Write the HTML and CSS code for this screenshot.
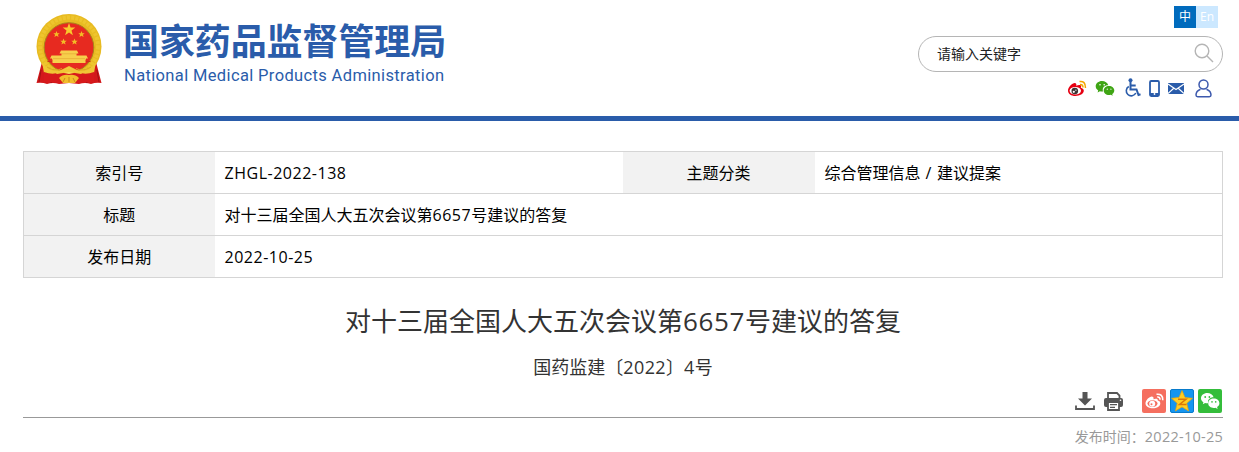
FILE: index.html
```html
<!DOCTYPE html>
<html lang="zh-CN">
<head>
<meta charset="utf-8">
<title>对十三届全国人大五次会议第6657号建议的答复</title>
<link rel="stylesheet" href="styles.css">
</head>
<body>
<header class="header">
  <div class="brand">
    <svg class="emblem" viewBox="0 0 68 72" width="68" height="72">
      <path d="M7 48 L1.500 69 Q7 68 12 70 Q18 68 24 70 L34 69 L44 70 Q50 68 56 70 Q61 68 66.500 69 L61 48Z" fill="#d3181b"/>
      <path d="M6 56l-2 12M11 58l-1 11M18 62l-2 7M62 56l2 12M57 58l1 11M50 62l2 7" stroke="#9f1013" stroke-width="1" fill="none"/>
      <circle cx="34" cy="32.500" r="32.500" fill="#e8bb22"/>
      <circle cx="34" cy="32.500" r="29" fill="none" stroke="#eec52e" stroke-width="4" stroke-dasharray="3 1.200"/>
      <circle cx="34" cy="33.500" r="24.800" fill="#e72a20" stroke="#a9841a" stroke-width="1"/>
      <path d="M34 9l1.600 4.600h4.700l-3.800 2.900 1.400 4.700-3.900-2.800-3.900 2.800 1.400-4.700-3.800-2.900h4.700z" fill="#f9c92c"/>
      <g fill="#f3bc26">
        <path id="star" d="M21.500 17l.9 2.200h2.300l-1.800 1.500.7 2.400-2.100-1.400-2.100 1.400.7-2.400-1.800-1.500h2.300z"/>
        <use href="#star" x="25"/><use href="#star" x="7" y="7.500"/><use href="#star" x="18" y="7.500"/>
      </g>
      <path d="M26 36.500h16l1.500 3h-2v2h10l1.500 3h-2v5h-34v-5h-2l1.500-3h10v-2h-2z" fill="#f7cf4b"/>
      <path d="M27 39.800h14M18 44.600h32" stroke="#e5ab35" stroke-width=".7"/>
      <path d="M13 45.500h4v4h34v-4h4" fill="none" stroke="#e72a20" stroke-width="1"/>
      <path d="M12.500 47.500h4.500M51 47.500h4.500" stroke="#c9301c"/>
      <path d="M7 48q8 12 19 8l8-4 8 4q11 4 19-8l-2 11q-8 7-18 4l-7-4-7 4q-10 3-18-4z" fill="#f0c636"/>
      <path d="M12 53q8 5 15 1.500M56 53q-8 5-15 1.500" fill="none" stroke="#dba624"/>
      <path d="M27 57l7-3.500 7 3.500-7 4z" fill="#f8d85a"/>
      <path d="M9 58q10 4 18-1l2 2 5 1 5-1 2-2q8 5 18 1v11q-9-2-14 0l-11-1-11 1q-5-2-14 0z" fill="#d7191c"/>
      <path d="M19 58q8-1 15-4 7 3 15 4l-3 2-12-2-12 2z" fill="#f0c636"/>
      <path d="M24 64q4-4 10-3 6-1 10 3l-4 5H28z" fill="#f2bd2b"/>
      <path d="M28 68l2-4m4 4v-5m6 5l-2-4" stroke="#cb851c"/>
    </svg>
    <div class="brand-text">
      <div class="brand-cn">国家药品监督管理局</div>
      <div class="brand-en">National Medical Products Administration</div>
    </div>
  </div>
  <div class="tools">
    <div class="lang"><a class="cn">中</a><a class="en">En</a></div>
    <div class="search"><span>请输入关键字</span>
      <svg width="20" height="20" viewBox="0 0 20 20" fill="none" stroke="#b5b5b5" stroke-width="1.400"><circle cx="8" cy="8" r="6.800"/><path d="M13 13l6 6"/></svg>
    </div>
    <div class="quick">
      <svg class="q-weibo" width="20" height="17" viewBox="0 0 20 17">
        <path d="M1 10.500C1 7 6 2.300 8.500 3.200c1 .4 1 1.500.7 2.500 2.500-1 5-1 5 .6 0 .5-.2 1.100-.4 1.500 2 .6 3 1.600 3 3 0 3-4 5.200-8.400 5.200S1 13.800 1 10.500z" fill="#e60012"/>
        <ellipse cx="8.300" cy="10.800" rx="5.700" ry="3.800" fill="#fff"/><circle cx="7.800" cy="11" r="3.300" fill="#3d3434"/><circle cx="6.800" cy="11.800" r="1.100" fill="#fff"/><circle cx="8.900" cy="10.200" r=".6" fill="#fff"/>
        <path d="M12.500 1.500q6-1 6 6.500M13 4.600q3-.4 3 2.800" fill="none" stroke="#f3a600" stroke-width="1.500"/>
      </svg>
      <svg class="q-wechat" width="20" height="17" viewBox="0 0 20 17">
        <path d="M7 1C3.500 1 .7 3.300.7 6.200c0 1.800 1 3.200 2.500 4.200l-.6 2 2.300-1.200q1.600.5 3.100.2C6.800 7.300 10 5.100 13.300 5.300 12.600 2.800 10 1 7 1z" fill="#3fa514"/>
        <path d="M14 6c-3 0-5.300 2-5.300 4.500S11 15 14 15q.9 0 1.800-.2l1.900 1-.5-1.700c1.300-.8 2.100-2.100 2.100-3.600C19.300 8 17 6 14 6z" fill="#3fa514"/>
        <g fill="#fff"><circle cx="5" cy="4.800" r=".8"/><circle cx="9.200" cy="4.800" r=".8"/><circle cx="12.300" cy="9.200" r=".6"/><circle cx="15.900" cy="9.200" r=".6"/></g>
      </svg>
      <svg class="q-chair" width="17" height="20" viewBox="0 0 17 20" fill="none" stroke="#2a5caa" stroke-width="2"><circle cx="6.500" cy="2.300" r="2" fill="#2a5caa" stroke="none"/><path d="M6.500 4v7.500h6l2 5.500 2-.7M6.700 7.500h5"/><path d="M4.800 8.500a5 5 0 1 0 7 6.500" stroke-width="1.600"/></svg>
      <svg class="q-phone" width="11" height="17" viewBox="0 0 11 17"><rect x="1" y="1" width="9" height="15" rx="1.200" fill="#fff" stroke="#2a5caa" stroke-width="1.800"/><path d="M1 13h9v3H1z" fill="#2a5caa"/><circle cx="5.500" cy="14" r=".9" fill="#fff"/></svg>
      <svg class="q-mail" width="16" height="11" viewBox="0 0 16 11"><path d="M0 0h16v11H0z" fill="#2a5caa"/><path d="M0 1l8 5.500L16 1M0 10.500l5.500-5M16 10.500l-5.500-5" fill="none" stroke="#fff" stroke-width="1.100"/></svg>
      <svg class="q-user" width="17" height="19" viewBox="0 0 17 19" fill="none" stroke="#3c59ad" stroke-width="1.500"><circle cx="8.500" cy="5.500" r="4.500"/><path d="M5.500 10.200Q1 12 1 16q0 1.700 1.700 1.700h11.600q1.700 0 1.700-1.700 0-4-4.500-5.800"/></svg>
    </div>
  </div>
</header>
<main class="main">
  <table class="info">
    <tr><th>索引号</th><td class="half"><span class="num">ZHGL-2022-138</span></td><th class="topic">主题分类</th><td>综合管理信息<span class="slash"> / </span>建议提案</td></tr>
    <tr><th>标题</th><td colspan="3">对十三届全国人大五次会议第<span class="num">6657</span>号建议的答复</td></tr>
    <tr><th>发布日期</th><td colspan="3"><span class="num">2022-10-25</span></td></tr>
  </table>
  <h1 class="title">对十三届全国人大五次会议第<span class="num">6657</span>号建议的答复</h1>
  <p class="docno">国药监建〔<span class="num">2022</span>〕<span class="num">4</span>号</p>
  <div class="actions">
    <svg class="a-down" width="20" height="19" viewBox="0 0 20 19"><path d="M7.500 0h5v6.500H17L10 13.500 3 6.500h4.500z" fill="#555"/><path d="M1 13.500V17h18v-3.500" fill="none" stroke="#555" stroke-width="1.800"/></svg>
    <svg class="a-print" width="19" height="19" viewBox="0 0 19 19"><path d="M4 6V1h9l2.500 2.500V6" fill="#fff" stroke="#555" stroke-width="1.800"/><rect y="6" width="19" height="9" rx="2" fill="#555"/><path d="M4 10h11v8H4z" fill="#fff" stroke="#555" stroke-width="1.800"/><path d="M6 12.700h7M6 15.300h5" stroke="#555" stroke-width="1.200"/><circle cx="16.500" cy="8.300" r=".8" fill="#fff"/></svg>
    <svg class="a-share" width="24" height="24" viewBox="0 0 24 24"><rect width="24" height="24" rx="2" fill="#f56f5f"/><path d="M3.500 14.500c0-3.200 4.300-7.500 7-6.800 1.300.3 1.200 1.600.9 2.500 2.200-.9 4.800-.8 4.400 1.400 1.900.5 2.500 1.500 2.500 2.900 0 2.700-3.500 4.800-7.400 4.800s-7.400-2-7.400-4.800z" fill="#fff"/><ellipse cx="10.500" cy="14.600" rx="5" ry="3.300" fill="#f56f5f"/><circle cx="10.200" cy="14.700" r="3" fill="#fff"/><circle cx="9.500" cy="15.200" r="1" fill="#f56f5f"/><path d="M14.500 5.300q6.500-.7 6.300 6M15.200 8q3-.2 2.800 2.700" fill="none" stroke="#fff" stroke-width="1.600"/></svg>
    <svg class="a-share" width="24" height="24" viewBox="0 0 24 24"><rect x=".5" y=".5" width="23" height="23" rx="1.500" fill="#1595f0" stroke="#087bcb"/><path d="M12 1.500l3 7 7.500.8-5.700 5 1.800 7.600-6.600-4-6.600 4 1.800-7.600-5.700-5 7.500-.8z" fill="#ffce22" stroke="#e9a40a" stroke-width=".7"/><path d="M8 10.300h8l-6.500 5.200h7" fill="none" stroke="#db7705" stroke-width="1.500"/></svg>
    <svg class="a-share" width="24" height="24" viewBox="0 0 24 24"><rect width="24" height="24" rx="2" fill="#34bd3b"/><path d="M9.300 4C5.700 4 3 6.300 3 9.200c0 1.700.9 3 2.400 4l-.6 2 2.300-1.200q1.500.4 3 .2c-.8-3.500 2-6 5.500-5.900C15 5.800 12.300 4 9.300 4z" fill="#fff"/><path d="M15.800 9.600c-3.200 0-5.600 2-5.600 4.700s2.400 4.700 5.600 4.700q.9 0 1.700-.2l2.100 1.100-.5-1.800c1.400-.8 2.300-2.200 2.300-3.800 0-2.700-2.500-4.700-5.600-4.700z" fill="#fff"/><g fill="#34bd3b"><circle cx="7.200" cy="8" r=".9"/><circle cx="11.400" cy="8" r=".9"/><circle cx="14" cy="12.900" r=".8"/><circle cx="17.700" cy="12.900" r=".8"/></g></svg>
  </div>
  <div class="pubtime">发布时间：<span>2022-10-25</span></div>
</main>
</body>
</html>
```
FILE: styles.css
```css
* { box-sizing: border-box; }
body { margin: 0; background: #fff; color: #000; font-family: "Open Sans", "Noto Sans CJK SC", sans-serif; overflow: hidden; }
.header { display: flex; justify-content: space-between; height: 121px; border-bottom: 5px solid #2a5caa; padding: 0 16px 0 35px; }
.brand { display: flex; padding-top: 14px; }
.emblem { display: block; flex: none; }
.brand-text { padding: 2px 0 0 20px; color: #2a5caa; white-space: nowrap; }
.brand-cn { font: 700 36px/46px "Noto Sans CJK SC", sans-serif; letter-spacing: -0.1px; }
.brand-en { font: 400 16.5px/20px Roboto, sans-serif; letter-spacing: 0.36px; padding: 4px 0 0 1px; }
.tools { width: 305px; padding-top: 6px; }
.lang { display: flex; justify-content: flex-end; padding-right: 5px; font-size: 12px; line-height: 22px; text-align: center; color: #fff; }
.lang a { width: 22px; height: 22px; }
.lang .cn { background: #006bbd; }
.lang .en { background: #cce8ff; }
.search { display: flex; align-items: center; justify-content: space-between; height: 36px; margin-top: 8px; padding: 0 8px 2px 18px; border: 1px solid #b5b5b5; border-radius: 18px; font-size: 14px; color: #222; }
.quick { display: flex; align-items: center; justify-content: flex-end; height: 20px; margin-top: 6px; padding-right: 11px; }
.q-wechat { margin-left: 8px; }
.q-chair { margin-left: 9px; }
.q-phone { margin-left: 8px; }
.q-mail { margin-left: 8px; }
.q-user { margin-left: 11px; }
.main { padding: 30px 16px 0 23px; }
.info { width: 1200px; border-collapse: collapse; table-layout: fixed; border: 1px solid #d5d5d5; font-size: 16px; line-height: 24px; }
.info tr { height: 42px; border-bottom: 1px solid #d5d5d5; }
.info th { width: 191px; padding: 0; background: #f2f2f2; font-weight: 400; text-align: center; }
.info .topic { width: 192px; }
.info td { padding: 0 10px; }
.info .half { width: 408px; }
.info .num { letter-spacing: 0.52px; }
.info .slash { letter-spacing: 0.8px; }
.title { margin: 23px 0 0; font-size: 26px; font-weight: 400; line-height: 40px; text-align: center; color: #333; }
.title .num { letter-spacing: 0.6px; }
.docno { margin: 13px 0 0; font-size: 18px; line-height: 26px; text-align: center; color: #333; }
.docno .num { letter-spacing: 0.4px; }
.actions { display: flex; align-items: center; justify-content: flex-end; height: 38px; padding: 5px 1px 0 0; border-bottom: 1px solid #999; }
.a-print { margin: 0 15px 0 9px; }
.a-share { margin-left: 4px; }
.pubtime { padding-top: 8px; text-align: right; font-size: 14px; line-height: 22px; color: #999; }
.pubtime span { font-size: 14.5px; letter-spacing: 0.25px; }
```
